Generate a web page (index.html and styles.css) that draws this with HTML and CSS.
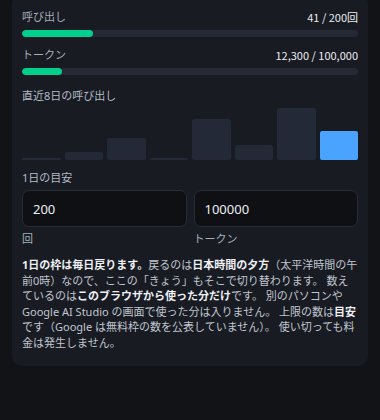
FILE: index.html
```html
<!DOCTYPE html>
<html lang="ja">
<head>
<meta charset="utf-8">
<link rel="stylesheet" href="styles.css">
</head>
<body>
<div class="card">
  <div class="row">
    <span class="label">呼び出し</span>
    <span class="value">41 / 200回</span>
  </div>
  <div class="track"><div class="fill" style="width:21%"></div></div>

  <div class="row row2">
    <span class="label">トークン</span>
    <span class="value">12,300 / 100,000</span>
  </div>
  <div class="track"><div class="fill" style="width:12%"></div></div>

  <div class="section">直近8日の呼び出し</div>
  <div class="chart">
    <div class="bar" style="height:2px"></div>
    <div class="bar" style="height:8px"></div>
    <div class="bar" style="height:22px"></div>
    <div class="bar" style="height:2px"></div>
    <div class="bar" style="height:41px"></div>
    <div class="bar" style="height:15px"></div>
    <div class="bar" style="height:52px"></div>
    <div class="bar today" style="height:29px"></div>
  </div>

  <div class="section limit">1日の目安</div>
  <div class="inputs">
    <div class="field">
      <input class="box" type="text" value="200">
      <span class="unit">回</span>
    </div>
    <div class="field">
      <input class="box" type="text" value="100000">
      <span class="unit">トークン</span>
    </div>
  </div>

  <p class="note"><b>1日の枠は毎日戻ります。</b>戻るのは<b>日本時間の夕方</b>（太平洋時間の午前0時）なので、ここの「きょう」もそこで切り替わります。 数えているのは<b>このブラウザから使った分だけ</b>です。 別のパソコンやGoogle AI Studio の画面で使った分は入りません。 上限の数は<b>目安</b>です（Google は無料枠の数を公表していません）。 使い切っても料金は発生しません。</p>
</div>
</body>
</html>
```

FILE: styles.css
```css
html, body {
  margin: 0;
  padding: 0;
  background: #111317;
  font-family: "Noto Sans", "Noto Sans CJK JP", sans-serif;
  font-size: 11px;
  color: #c3c8d1;
}

.card {
  margin: -6px 12px 0 12px;
  background: #181b22;
  border-radius: 10px;
  padding: 15px 10px 15px 10px;
}

.row {
  display: flex;
  justify-content: space-between;
  align-items: center;
  line-height: 16px;
}

.row2 {
  margin-top: 10px;
}

.label {
  color: #a7aebb;
}

.value {
  color: #e9ecf1;
  font-family: "Noto Sans CJK JP", sans-serif;
  font-weight: 400;
}

.track {
  margin-top: 5px;
  height: 7px;
  border-radius: 4px;
  background: #242935;
  overflow: hidden;
}

.fill {
  height: 100%;
  background: #00d08b;
  border-radius: 4px;
}

.section {
  margin-top: 13px;
  line-height: 16px;
  color: #b3bac6;
}

.chart {
  margin-top: 4px;
  height: 52px;
  display: grid;
  grid-template-columns: repeat(8, 1fr);
  gap: 4px;
  align-items: end;
}

.bar {
  background: #232936;
  border-radius: 2px;
}

.bar.today {
  background: #4aa3ff;
}

.limit {
  margin-top: 10px;
}

.inputs {
  margin-top: 4px;
  display: grid;
  grid-template-columns: 1fr 1fr;
  gap: 7px;
}

.field {
  display: flex;
  flex-direction: column;
}

.box {
  box-sizing: border-box;
  width: 100%;
  height: 37px;
  background: #0f1014;
  border: 1px solid #272c36;
  border-radius: 7px;
  padding: 0 10px;
  color: #eceef2;
  font-family: "Noto Sans", "Noto Sans CJK JP", sans-serif;
  font-size: 13px;
  outline: none;
}

.unit {
  margin-top: 4px;
  line-height: 16px;
  color: #a7aebb;
}

.note {
  margin: 10px 0 0 0;
  line-height: 15.6px;
  color: #c0c6d0;
}

.note b {
  color: #eef0f4;
  font-weight: 700;
}
```
